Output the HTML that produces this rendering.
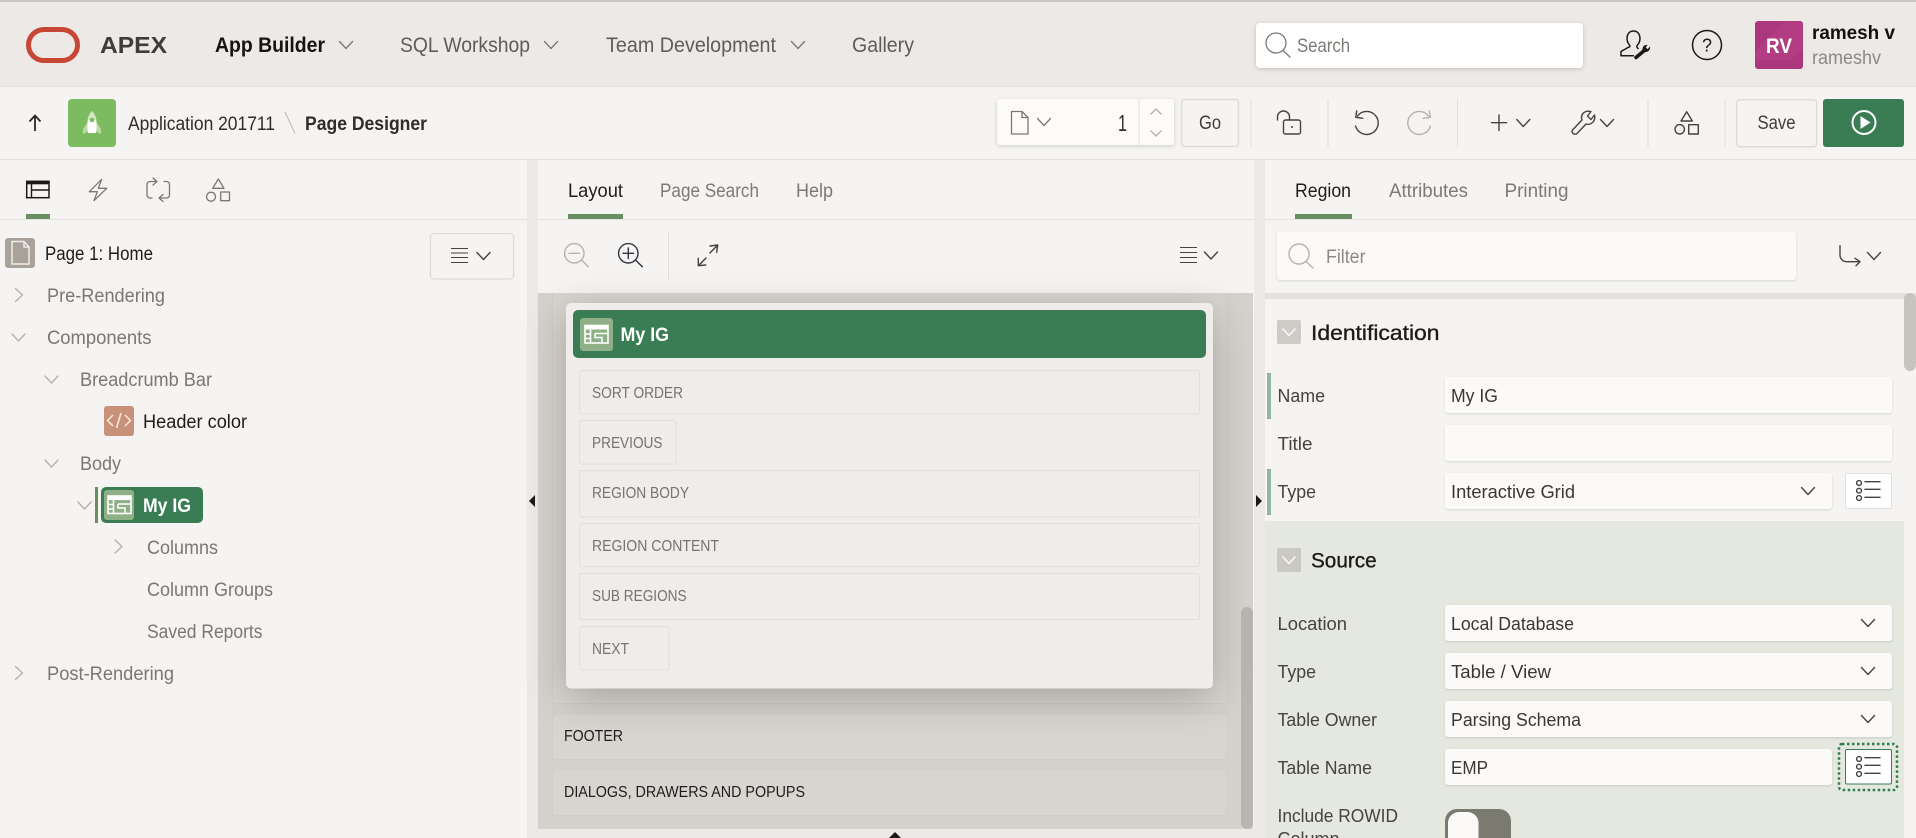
<!DOCTYPE html>
<html lang="en">
<head>
<meta charset="utf-8">
<title>Page Designer</title>
<style>
html,body{margin:0;padding:0;width:1916px;height:838px;overflow:hidden;background:#f5f4f2}
svg{display:block}
text{font-family:"Liberation Sans",sans-serif;white-space:pre}
.nav{font-size:21px;fill:#605c57}
.tree{font-size:19px;fill:#7b7772}
.blk{font-size:19px;fill:#1e1c1a}
.tab{font-size:19.5px;fill:#7d7a76}
.lbl{font-size:18.5px;fill:#45423f}
.val{font-size:18.5px;fill:#3a3734}
.box{font-size:16px;fill:#77736e}
.box2{font-size:16px;fill:#1f1d1b}
.sec{font-size:21.5px;fill:#1c1a18;stroke:#1c1a18;stroke-width:.35}
.i{fill:none;stroke:#45423f;stroke-width:1.4;stroke-linecap:round;stroke-linejoin:round}
.g{fill:none;stroke:#7b7772;stroke-width:1.3;stroke-linecap:round;stroke-linejoin:round}
.l{fill:none;stroke:#b5b2ae;stroke-width:1.4;stroke-linecap:round;stroke-linejoin:round}
.d{fill:#d8d5d0;stroke:#c9c5c0;stroke-width:1;stroke-dasharray:1 1}
.d2{fill:none;stroke:#d6d2cd;stroke-width:1;stroke-dasharray:1 1}
.inp{fill:#fbfaf8;filter:drop-shadow(0 1px 1px rgba(0,0,0,.12))}
.sep{stroke:#e2dfdb;stroke-width:1}
</style>
</head>
<body>
<svg width="1916" height="838" viewBox="0 0 1916 838" xmlns="http://www.w3.org/2000/svg">
<defs>
<path id="cd" d="M-6.5-3.5L0 3.5L6.5-3.5"/>
<path id="cr" d="M-3.5-6.5L3.5 0L-3.5 6.5"/>
<g id="list">
<circle cx="3" cy="2" r="2.4"/><circle cx="3" cy="9.7" r="2.4"/><circle cx="3" cy="17" r="2.4"/>
<path d="M9 .7H24M9 8.3H24M9 16.3H24"/>
</g>
<g id="tbl">
<rect x="0" y="0" width="23" height="17.5" fill="none" stroke="#fff" stroke-width="1.6"/>
<rect x="0" y="0" width="23" height="4" fill="#fff"/>
<path d="M5.5 4V17.5M0 8.5H5.5M0 13H5.5M10 8H23M10 8V12H17V17.5" fill="none" stroke="#fff" stroke-width="1.5"/>
</g>
</defs>

<!-- base -->
<rect width="1916" height="838" fill="#f5f4f2"/>
<rect width="1916" height="2" fill="#c9c7c4"/>
<rect y="2" width="1916" height="84" fill="#ece9e6"/>
<rect y="86" width="1916" height="1" fill="#e4e1dd"/>
<rect y="159" width="1916" height="1" fill="#e4e1dd"/>
<rect x="527" y="160" width="11" height="678" fill="#ece9e6"/>
<rect x="1254" y="160" width="11" height="678" fill="#ece9e6"/>
<rect y="219" width="527" height="1" fill="#e6e3df"/>
<rect x="538" y="219" width="716" height="1" fill="#e6e3df"/>
<rect x="1265" y="219" width="651" height="1" fill="#e6e3df"/>

<!-- header -->
<rect x="28.5" y="29.5" width="49" height="31" rx="15.5" fill="none" stroke="#c74634" stroke-width="5"/>
<text x="100" y="53" font-size="23.5" font-weight="700" fill="#3f3c39" textLength="67" lengthAdjust="spacingAndGlyphs">APEX</text>
<text x="215" y="52" font-size="21" font-weight="700" fill="#151413" textLength="110" lengthAdjust="spacingAndGlyphs">App Builder</text>
<use href="#cd" x="346" y="45" class="g" stroke-width="1.1"/>
<text x="400" y="52" class="nav" textLength="130" lengthAdjust="spacingAndGlyphs">SQL Workshop</text>
<use href="#cd" x="551" y="45" class="g" stroke-width="1.1"/>
<text x="606" y="52" class="nav" textLength="170" lengthAdjust="spacingAndGlyphs">Team Development</text>
<use href="#cd" x="798" y="45" class="g" stroke-width="1.1"/>
<text x="852" y="52" class="nav" textLength="62" lengthAdjust="spacingAndGlyphs">Gallery</text>

<rect x="1256" y="23" width="327" height="45" rx="4" fill="#fff" style="filter:drop-shadow(0 1px 2px rgba(0,0,0,.18))"/>
<circle cx="1276" cy="43" r="10" class="g"/><path d="M1283 50.5L1290 57" class="g"/>
<text x="1297" y="52" font-size="19.5" fill="#7d7a76" textLength="53" lengthAdjust="spacingAndGlyphs">Search</text>

<!-- user wrench -->
<path d="M1629.500 45C1625.500 41 1626 31 1633.500 31C1641 31 1641.500 41 1637.500 45C1636 46.500 1637 47.500 1638.500 49M1629.500 45C1630.500 46.500 1629.500 47 1628 47.500L1621 51.500V55.700H1634" fill="none" stroke="#1c1a18" stroke-width="1.500" stroke-linejoin="round"/>
<path d="M1636 57.500L1645.500 49.500" stroke="#1c1a18" stroke-width="3.600" stroke-linecap="round"/>
<path d="M1642.500 50C1642 46.500 1645 44.500 1647.500 45L1645.500 47.800L1647.500 49.300L1650 46.500C1650.700 49.800 1648 52.300 1645 52Z" fill="#1c1a18"/>
<!-- help -->
<circle cx="1707" cy="45" r="14.500" fill="none" stroke="#1c1a18" stroke-width="1.500"/>
<text x="1707" y="51.500" font-size="18" fill="#1c1a18" text-anchor="middle">?</text>
<!-- avatar -->
<rect x="1755" y="21" width="48" height="48" rx="3" fill="#ab387c"/>
<path d="M1785 21H1800a3 3 0 0 1 3 3V50L1790 60H1755V52Z" fill="#b43f84" opacity=".75"/>
<text x="1766" y="53" font-size="21" font-weight="700" fill="#fff" textLength="26" lengthAdjust="spacingAndGlyphs">RV</text>
<text x="1812" y="39" font-size="19" font-weight="700" fill="#111" textLength="83" lengthAdjust="spacingAndGlyphs">ramesh v</text>
<text x="1812" y="64" font-size="19" fill="#8d8985" textLength="69" lengthAdjust="spacingAndGlyphs">rameshv</text>

<!-- toolbar left -->
<path d="M35 131V116M29.500 121.500L35 115.500L40.500 121.500" fill="none" stroke="#2a2724" stroke-width="1.800" stroke-linejoin="round"/>
<rect x="68" y="99" width="48" height="48" rx="4" fill="#7dbb60"/>
<path d="M87 123L83 129V134L88 131.500ZM97 123L101 129V134L96 131.500Z" fill="#b9dca5"/>
<path d="M92 111C87.500 116 86.500 123 88 133H96C97.500 123 96.500 116 92 111Z" fill="#fff"/>
<path d="M92 111C89.500 113.500 88 116.500 87.600 120H96.400C96 116.500 94.500 113.500 92 111Z" fill="#cfe6c0"/>
<circle cx="92" cy="120" r="2.300" fill="#7dbb60"/>
<text x="128" y="130" font-size="19" fill="#2f2c2a" textLength="147" lengthAdjust="spacingAndGlyphs">Application 201711</text>
<path d="M285 112L295 133.500" stroke="#bdb9b4" stroke-width="1"/>
<text x="305" y="130" font-size="19" font-weight="700" fill="#2f2c2a" textLength="122" lengthAdjust="spacingAndGlyphs">Page Designer</text>

<!-- toolbar right -->
<rect x="997" y="99" width="177" height="46" rx="3" fill="#fcfbfa" style="filter:drop-shadow(0 1px 2px rgba(0,0,0,.16))"/>
<path d="M1139 99V145" class="sep"/>
<path d="M1011.500 111.500H1022L1028 117.500V134H1011.500ZM1022 111.500V117.500H1028" class="g" stroke-width="1.100"/>
<use href="#cd" x="1044" y="122" class="g"/>
<text x="1118" y="131" font-size="23" fill="#2f2c2a" textLength="9" lengthAdjust="spacingAndGlyphs">1</text>
<path d="M1151 114L1156 109L1161 114" class="l" stroke="#8d8985"/>
<path d="M1151 131L1156 136L1161 131" class="l" stroke="#8d8985"/>
<rect x="1181.500" y="99.500" width="57" height="47" rx="3" fill="#f5f4f2" stroke="#dfdcd8" stroke-width="1.500"/>
<text x="1199" y="129" font-size="19" fill="#3f3c39" textLength="22" lengthAdjust="spacingAndGlyphs">Go</text>
<path d="M1251 99V147M1328 99V147M1457.500 99V147M1648 99V147M1725 99V147" class="sep"/>
<!-- lock -->
<rect x="1283.500" y="120" width="17" height="14" rx="2" class="i"/>
<circle cx="1292" cy="127" r="1" fill="#45423f"/>
<path d="M1277.500 120V117A6 6 0 0 1 1289.500 117V120" class="i"/>
<!-- undo/redo -->
<path d="M1357.500 116A11.500 11.500 0 1 1 1355.600 126M1356.700 111L1355.700 117.300L1362.700 118.300" class="i"/>
<path d="M1428.500 116A11.500 11.500 0 1 0 1430.400 126M1429.300 111L1430.300 117.300L1423.300 118.300" class="l"/>
<!-- plus -->
<path d="M1499 115V130.500M1491.500 122.700H1506.500" class="i"/>
<use href="#cd" x="1523.300" y="123" class="i"/>
<!-- wrench -->
<path d="M1572.500 130L1582 120C1580 114 1585 110 1591 111.500L1587.500 116L1591 119.500L1594.500 115C1596 121 1591 125.500 1586 124L1577 133.500C1575 135.500 1570.500 133 1572.500 130Z" class="i" stroke-width="1.200"/>
<use href="#cd" x="1607" y="123" class="i"/>
<!-- shapes -->
<path d="M1686.700 111.700L1681 121H1692.300Z" class="i"/><circle cx="1679.700" cy="129.300" r="4.700" class="i"/><rect x="1688.700" y="124.700" width="9.600" height="9.300" class="i"/>
<rect x="1736.700" y="99.700" width="80" height="47" rx="3" fill="#f5f4f2" stroke="#dfdcd8" stroke-width="1.500"/>
<text x="1757.500" y="129" font-size="19" fill="#3f3c39" textLength="38" lengthAdjust="spacingAndGlyphs">Save</text>
<rect x="1823" y="99" width="81" height="48" rx="3" fill="#3a7d55"/>
<circle cx="1864" cy="122.500" r="11.500" fill="none" stroke="#fff" stroke-width="2"/>
<path d="M1860.500 116V129L1870.500 122.500Z" fill="#fff"/>

<!-- left tabs -->
<rect x="26.700" y="181.300" width="22.300" height="16.400" fill="none" stroke="#1c1a18" stroke-width="1.500"/>
<rect x="26.700" y="181.300" width="22.300" height="3" fill="#1c1a18"/>
<path d="M31.500 184V197.500M31.500 190H49" stroke="#1c1a18" stroke-width="1.400"/>
<path d="M89.300 191.700L101.700 179.300L98.300 188.300H106.700L94 200.700L97.300 191.700Z" class="g"/>
<path d="M156 181.500H150a3 3 0 0 0-3 3V195a3 3 0 0 0 3 3H152M153 178L157 181.500L153 185M160 198H166.500a3 3 0 0 0 3-3V184.500a3 3 0 0 0-3-3H164M163 194.500L159 198L163 201.500" class="g"/>
<path d="M218.300 179L212.700 188.300H224Z" class="g"/><circle cx="211" cy="196.700" r="4.500" class="g"/><rect x="220.700" y="192" width="8.800" height="8.700" class="g"/>
<rect x="26" y="214" width="24" height="5" fill="#6a8f63"/>

<!-- center tabs -->
<text x="568" y="197" font-size="19.5" fill="#1f1d1b" textLength="55" lengthAdjust="spacingAndGlyphs">Layout</text>
<rect x="568" y="214" width="55" height="5" fill="#6a8f63"/>
<text x="660" y="197" class="tab" textLength="99" lengthAdjust="spacingAndGlyphs">Page Search</text>
<text x="796" y="197" class="tab" textLength="37" lengthAdjust="spacingAndGlyphs">Help</text>

<!-- right tabs -->
<text x="1295" y="197" font-size="19.5" fill="#1f1d1b" textLength="56" lengthAdjust="spacingAndGlyphs">Region</text>
<rect x="1295" y="214" width="57" height="5" fill="#6a8f63"/>
<text x="1389" y="197" class="tab" textLength="79" lengthAdjust="spacingAndGlyphs">Attributes</text>
<text x="1504.500" y="197" class="tab" textLength="64" lengthAdjust="spacingAndGlyphs">Printing</text>

<!-- tree -->
<rect x="5" y="238" width="30" height="30" rx="3" fill="#a8a29a"/>
<path d="M12 241.500H24L29 247V264H12ZM24 241.500V247H29" fill="none" stroke="#efedea" stroke-width="1.500"/>
<text x="45" y="260" class="blk" textLength="108" lengthAdjust="spacingAndGlyphs">Page 1: Home</text>
<rect x="430.500" y="233.500" width="83" height="45.500" rx="3" fill="#f5f4f2" stroke="#dfdcd8" stroke-width="1.300"/>
<path d="M451 248.500H468M451 253H468M451 257.500H468M451 262.500H468" stroke="#45423f" stroke-width="1.100"/>
<use href="#cd" x="483.500" y="256" class="i"/>

<use href="#cr" x="19" y="295" class="l"/>
<text x="47" y="302" class="tree" textLength="118" lengthAdjust="spacingAndGlyphs">Pre-Rendering</text>
<use href="#cd" x="18.500" y="337.500" class="l"/>
<text x="47" y="344" class="tree" textLength="104.500" lengthAdjust="spacingAndGlyphs">Components</text>
<use href="#cd" x="51.500" y="379.500" class="l"/>
<text x="80" y="386" class="tree" textLength="132" lengthAdjust="spacingAndGlyphs">Breadcrumb Bar</text>
<rect x="104" y="406" width="30" height="30" rx="3" fill="#c8927a"/>
<path d="M113 415L107.500 420.500L113 426M116.500 428L121 413M125 415L130.500 420.500L125 426" fill="none" stroke="#fbeadc" stroke-width="1.500"/>
<text x="143" y="428" class="blk" textLength="104" lengthAdjust="spacingAndGlyphs">Header color</text>
<use href="#cd" x="51.500" y="463.500" class="l"/>
<text x="80" y="470" class="tree" textLength="41" lengthAdjust="spacingAndGlyphs">Body</text>
<use href="#cd" x="84.500" y="505.500" class="l"/>
<rect x="95" y="487" width="3" height="36" fill="#6a8f63"/>
<rect x="101" y="487" width="102" height="36" rx="5" fill="#3a7d55"/>
<rect x="104" y="490" width="30" height="30" rx="3" fill="#8fb087"/>
<use href="#tbl" x="108" y="496"/>
<text x="143" y="512" font-size="19.5" font-weight="700" fill="#fff" textLength="48" lengthAdjust="spacingAndGlyphs">My IG</text>
<use href="#cr" x="118.500" y="546.500" class="l"/>
<text x="147" y="554" class="tree" textLength="71" lengthAdjust="spacingAndGlyphs">Columns</text>
<text x="147" y="596" class="tree" textLength="126" lengthAdjust="spacingAndGlyphs">Column Groups</text>
<text x="147" y="638" class="tree" textLength="115.500" lengthAdjust="spacingAndGlyphs">Saved Reports</text>
<use href="#cr" x="19" y="673" class="l"/>
<text x="47" y="680" class="tree" textLength="127" lengthAdjust="spacingAndGlyphs">Post-Rendering</text>

<!-- gutter handles -->
<path d="M535 495V507L529 501Z" fill="#1c1a18"/>
<path d="M1256 495V507L1262 501Z" fill="#1c1a18"/>

<!-- layout toolbar -->
<circle cx="574.300" cy="253.300" r="9.700" class="l"/>
<path d="M569 253.300H579.500M581.500 260L588.300 266.700" class="l"/>
<circle cx="628.300" cy="253.300" r="9.700" class="i" style="stroke:#2c3440"/>
<path d="M623 253.300H633.500M628.300 248V258.500M635.500 260L642.300 266.700" class="i" style="stroke:#2c3440"/>
<path d="M668.500 232V280" class="sep"/>
<path d="M717.700 245L710 253M698.300 265.700L706 258M710 246L717.700 245L716.700 252.300M698.300 258.300V265.700L705.700 265" class="i"/>
<path d="M1180 247.500H1197M1180 252.500H1197M1180 257.500H1197M1180 262.500H1197" stroke="#45423f" stroke-width="1.100"/>
<use href="#cd" x="1211" y="255.500" class="i"/>

<!-- layout canvas -->
<rect x="538" y="293" width="715" height="536" fill="#d5d1cc"/>
<path d="M552.500 293V700.500a3 3 0 0 0 3 3H1224a3 3 0 0 0 3-3V293" fill="#d8d5d0" stroke="#c9c5c0" stroke-dasharray="1 1"/>
<rect x="552.500" y="713.500" width="674.500" height="46" rx="3" class="d"/>
<rect x="552.500" y="769.500" width="674.500" height="46" rx="3" class="d"/>
<text x="564" y="741" class="box2" textLength="59" lengthAdjust="spacingAndGlyphs">FOOTER</text>
<text x="564" y="797" class="box2" textLength="241" lengthAdjust="spacingAndGlyphs">DIALOGS, DRAWERS AND POPUPS</text>
<rect x="1241" y="607" width="12" height="222" rx="6" fill="#b9b5b0"/>

<!-- dialog -->
<rect x="566" y="303" width="647" height="385.500" rx="5" fill="#efecE9" style="filter:drop-shadow(0 9px 20px rgba(0,0,0,.24))"/>
<rect x="573" y="310" width="633" height="48" rx="5" fill="#3a7d55"/>
<rect x="580" y="318" width="33" height="33" rx="3" fill="#8fb087"/>
<use href="#tbl" x="585" y="325.500"/>
<text x="620.500" y="341" font-size="19.5" font-weight="700" fill="#fff" textLength="48.500" lengthAdjust="spacingAndGlyphs">My IG</text>
<rect x="579.500" y="370.500" width="620" height="43.500" rx="2" class="d2"/>
<text x="592" y="398" class="box" textLength="91" lengthAdjust="spacingAndGlyphs">SORT ORDER</text>
<rect x="579.500" y="420.500" width="96.500" height="43.500" rx="2" class="d2"/>
<text x="592" y="448" class="box" textLength="70.500" lengthAdjust="spacingAndGlyphs">PREVIOUS</text>
<rect x="579.500" y="470.500" width="620" height="46.500" rx="2" class="d2"/>
<text x="592" y="498" class="box" textLength="97" lengthAdjust="spacingAndGlyphs">REGION BODY</text>
<rect x="579.500" y="523.500" width="620" height="43" rx="2" class="d2"/>
<text x="592" y="551" class="box" textLength="127" lengthAdjust="spacingAndGlyphs">REGION CONTENT</text>
<rect x="579.500" y="573.500" width="620" height="46" rx="2" class="d2"/>
<text x="592" y="601" class="box" textLength="94.600" lengthAdjust="spacingAndGlyphs">SUB REGIONS</text>
<rect x="579.500" y="626.500" width="89.500" height="43.500" rx="2" class="d2"/>
<text x="592" y="654" class="box" textLength="37" lengthAdjust="spacingAndGlyphs">NEXT</text>
<rect x="538" y="829" width="716" height="9" fill="#ece9e6"/>
<path d="M889 838L895 832L901 838Z" fill="#1c1a18"/>

<!-- right panel top -->
<rect x="1277" y="232" width="519" height="48" rx="3" class="inp"/>
<circle cx="1299" cy="254" r="10" class="l"/><path d="M1306 261.500L1313 268" class="l"/>
<text x="1326" y="263" font-size="19" fill="#8d8985" textLength="39.500" lengthAdjust="spacingAndGlyphs">Filter</text>
<path d="M1840 245.700V255A6.700 6.700 0 0 0 1846.700 261.700H1860M1855 258.300L1860 261.700L1856 265.700" class="i"/>
<use href="#cd" x="1874" y="256" class="i"/>
<rect x="1265" y="293" width="651" height="6" fill="#e6e3df"/>
<rect x="1265" y="521" width="639" height="317" fill="#e5e8df"/>
<rect x="1904" y="293" width="12" height="78" rx="6" fill="#c7c4bf"/>

<!-- identification -->
<rect x="1277" y="320" width="24" height="24" rx="2" fill="#cfccc7"/>
<use href="#cd" x="1289" y="332" fill="none" stroke="#fbfaf8" stroke-width="1.500"/>
<text x="1311" y="340" class="sec" textLength="128.500" lengthAdjust="spacingAndGlyphs">Identification</text>
<rect x="1267" y="373" width="4" height="46" fill="#8fb8a0"/>
<text x="1277.500" y="402" class="lbl" textLength="47.500" lengthAdjust="spacingAndGlyphs">Name</text>
<rect x="1445" y="377" width="447" height="36" rx="3" class="inp"/>
<text x="1451" y="402" class="val" textLength="47" lengthAdjust="spacingAndGlyphs">My IG</text>
<text x="1277.500" y="450" class="lbl" textLength="35" lengthAdjust="spacingAndGlyphs">Title</text>
<rect x="1445" y="425" width="447" height="36" rx="3" class="inp"/>
<rect x="1267" y="469" width="4" height="46" fill="#8fb8a0"/>
<text x="1277.500" y="498" class="lbl" textLength="38.500" lengthAdjust="spacingAndGlyphs">Type</text>
<rect x="1445" y="473" width="387" height="36" rx="3" class="inp"/>
<text x="1451" y="498" class="val" textLength="124" lengthAdjust="spacingAndGlyphs">Interactive Grid</text>
<use href="#cd" x="1808" y="491" class="i"/>
<rect x="1845.500" y="473.500" width="46" height="35" rx="1.500" fill="#fff" stroke="#e2dfdb"/>
<use href="#list" x="1856" y="481" class="i" stroke-width="1.100"/>

<!-- source -->
<rect x="1277" y="548" width="24" height="24" rx="2" fill="#c9c9c2"/>
<use href="#cd" x="1289" y="560" fill="none" stroke="#fbfaf8" stroke-width="1.500"/>
<text x="1311" y="567.500" class="sec" textLength="65.600" lengthAdjust="spacingAndGlyphs">Source</text>

<text x="1277.500" y="630" class="lbl" textLength="69.500" lengthAdjust="spacingAndGlyphs">Location</text>
<rect x="1445" y="605" width="447" height="36" rx="3" class="inp"/>
<text x="1451" y="630" class="val" textLength="123" lengthAdjust="spacingAndGlyphs">Local Database</text>
<use href="#cd" x="1868" y="623" class="i"/>

<text x="1277.500" y="678" class="lbl" textLength="38.500" lengthAdjust="spacingAndGlyphs">Type</text>
<rect x="1445" y="653" width="447" height="36" rx="3" class="inp"/>
<text x="1451" y="678" class="val" textLength="100" lengthAdjust="spacingAndGlyphs">Table / View</text>
<use href="#cd" x="1868" y="671" class="i"/>

<text x="1277.500" y="726" class="lbl" textLength="99.500" lengthAdjust="spacingAndGlyphs">Table Owner</text>
<rect x="1445" y="701" width="447" height="36" rx="3" class="inp"/>
<text x="1451" y="726" class="val" textLength="130" lengthAdjust="spacingAndGlyphs">Parsing Schema</text>
<use href="#cd" x="1868" y="719" class="i"/>

<text x="1277.500" y="774" class="lbl" textLength="94.500" lengthAdjust="spacingAndGlyphs">Table Name</text>
<rect x="1445" y="749" width="387" height="36" rx="3" class="inp"/>
<text x="1451" y="774" class="val" textLength="37" lengthAdjust="spacingAndGlyphs">EMP</text>
<rect x="1839" y="744" width="58" height="46" rx="3" fill="none" stroke="#2f7d50" stroke-width="2.500" stroke-dasharray="2.500 2.500"/>
<rect x="1845.500" y="749.500" width="46" height="34.500" rx="1.500" fill="#fff" stroke="#3a7d55"/>
<use href="#list" x="1856" y="757" class="i" stroke-width="1.100"/>

<text x="1277.500" y="822" class="lbl" textLength="120.500" lengthAdjust="spacingAndGlyphs">Include ROWID</text>
<text x="1277.500" y="845" class="lbl" textLength="62" lengthAdjust="spacingAndGlyphs">Column</text>
<rect x="1445" y="809" width="66" height="50" rx="12" fill="#7a7a70"/>
<rect x="1448" y="812" width="30.500" height="44" rx="11" fill="#fbfaf8"/>
</svg>
</body>
</html>
